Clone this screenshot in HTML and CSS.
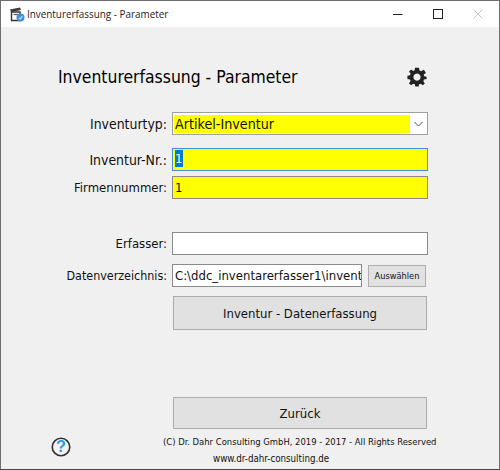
FILE: index.html
```html
<!DOCTYPE html>
<html lang="de">
<head>
    <meta charset="UTF-8">
    <meta name="viewport" content="width=device-width, initial-scale=1.0">
    <title>Inventurerfassung - Parameter</title>
    <link rel="stylesheet" href="styles.css">
</head>
<body>
    <div class="window">
        <!-- Title bar -->
        <div class="titlebar">
            <svg class="app-icon" width="16" height="16" viewBox="0 0 16 16">
                <path d="M1 3.5 L11 1.5 L12 4 L2 6 Z" fill="#3a3a3a"/>
                <path d="M2.5 6 H11 V14.5 H2.5 Z" fill="#fff" stroke="#333" stroke-width="1.4"/>
                <path d="M4.5 8.5 H9" stroke="#555" stroke-width="1.2"/>
                <circle cx="11.5" cy="11.5" r="4" fill="#3f8fd8"/>
                <path d="M9.8 11.8 L11.2 13 L13.4 10" stroke="#d5ecfb" stroke-width="1.1" fill="none"/>
            </svg>
            <span class="titlebar-text">Inventurerfassung - Parameter</span>
            <div class="window-buttons">
                <span class="win-btn">
                    <svg width="10" height="10" viewBox="0 0 10 10"><path d="M0 5.5 H9.5" stroke="#222" stroke-width="1"/></svg>
                </span>
                <span class="win-btn">
                    <svg width="10" height="10" viewBox="0 0 10 10"><rect x="0.5" y="0.5" width="9" height="9" fill="none" stroke="#222" stroke-width="1"/></svg>
                </span>
                <span class="win-btn">
                    <svg width="10" height="10" viewBox="0 0 10 10"><path d="M0.5 0.5 L9.5 9.5 M9.5 0.5 L0.5 9.5" stroke="#c4c4c4" stroke-width="1"/></svg>
                </span>
            </div>
        </div>

        <div class="content">
            <div class="heading-row">
                <h1>Inventurerfassung - Parameter</h1>
                <svg class="gear" width="20" height="20" viewBox="0 0 24 24">
                    <path fill="#222" fill-rule="evenodd" d="M9.6 1 H14.4 L15 4.2 L17 5 L19.7 3.2 L20.9 4.3 L22.7 7.1 L20 9 L20.7 11 L23.5 11.6 V14.4 L20.4 15 L19.6 17 L21.4 19.7 L18.9 21.9 L16.4 20 L14.6 20.8 L14 23.5 H10 L9.4 20.8 L7.4 20 L4.9 21.8 L2.3 19.4 L4.3 16.8 L3.5 15 L0.5 14.4 V10.6 L3.6 10 L4.3 8 L2.4 5.4 L5 2.9 L7.4 4.7 L9.2 4 Z M12 7.8 A4.3 4.3 0 1 0 12.01 7.8 Z"/>
                </svg>
            </div>

            <div class="form-row first-row">
                <label class="field-label label-wide">Inventurtyp:</label>
                <div class="combo">
                    <span class="combo-value">Artikel-Inventur</span>
                    <svg class="combo-arrow" width="9" height="6" viewBox="0 0 9 6"><path d="M0.5 1 L4.5 5 L8.5 1" fill="none" stroke="#555" stroke-width="1"/></svg>
                </div>
            </div>
            <div class="form-row nr-row">
                <label class="field-label label-wide">Inventur-Nr.:</label>
                <div class="field field-yellow field-focus"><span class="selected">1</span></div>
            </div>
            <div class="form-row firm-row">
                <label class="field-label">Firmennummer:</label>
                <div class="field field-yellow">1</div>
            </div>
            <div class="form-row erfasser-row">
                <label class="field-label">Erfasser:</label>
                <div class="field"></div>
            </div>
            <div class="form-row dir-row">
                <label class="field-label label-narrow">Datenverzeichnis:</label>
                <div class="field field-dir">C:\ddc_inventarerfasser1\invent</div>
                <button class="btn btn-small">Auswählen</button>
            </div>
            <div class="form-row start-row">
                <span></span>
                <button class="btn btn-big">Inventur - Datenerfassung</button>
            </div>
            <div class="form-row back-row">
                <span></span>
                <button class="btn btn-back">Zurück</button>
            </div>

            <div class="footer">
                <svg class="help" width="20" height="20" viewBox="0 0 21 21">
                    <circle cx="10.5" cy="10.5" r="9.2" fill="#f4f4f4" stroke="#333" stroke-width="1.7"/>
                    <text x="10.5" y="16.2" text-anchor="middle" class="help-mark">?</text>
                </svg>
                <div class="footer-text">
                    <p>(C) Dr. Dahr Consulting GmbH, 2019 - 2017 - All Rights Reserved</p>
                    <p class="footer-url">www.dr-dahr-consulting.de</p>
                </div>
            </div>
        </div>
    </div>
</body>
</html>
```

FILE: styles.css
```css
html, body {
    margin: 0;
    padding: 0;
}
body {
    width: 500px;
    height: 470px;
    overflow: hidden;
    font-family: "DejaVu Sans Condensed", "DejaVu Sans", sans-serif;
    font-stretch: condensed;
    color: #111;
}
.window {
    box-sizing: border-box;
    width: 500px;
    height: 470px;
    display: flex;
    flex-direction: column;
    background-color: #f0f0f0;
    border: 1px solid #6e6e6e;
    border-bottom-color: #444;
}
.titlebar {
    height: 26px;
    flex: none;
    display: flex;
    align-items: center;
    background: white;
    padding-left: 8px;
}
.app-icon {
    margin-right: 2px;
}
.titlebar-text {
    font-family: "Open Sans", sans-serif;
    font-stretch: normal;
    font-size: 9.9px;
    color: #222;
}
.window-buttons {
    margin-left: auto;
    display: flex;
    padding-right: 1px;
}
.win-btn {
    width: 40px;
    height: 26px;
    display: flex;
    align-items: center;
    justify-content: center;
}
.content {
    flex: 1;
    padding: 0 71px 0 0;
}
.heading-row {
    display: flex;
    align-items: center;
    justify-content: space-between;
    height: 24px;
    margin-top: 38px;
    padding-left: 57px;
}
.heading-row h1 {
    margin: 0;
    font-size: 17.4px;
    font-weight: 400;
    color: #000;
}
.gear {
    margin-right: 1px;
}
.form-row {
    display: grid;
    grid-template-columns: 166px 1fr;
    column-gap: 5px;
    align-items: center;
}
.field-label {
    text-align: right;
    font-size: 13px;
    white-space: nowrap;
}
.label-wide {
    font-size: 13.9px;
}
.label-narrow {
    font-size: 12.4px;
}
.first-row { margin-top: 23px; }
.nr-row { margin-top: 13px; }
.firm-row { margin-top: 5px; }
.erfasser-row { margin-top: 33px; }
.dir-row {
    margin-top: 9px;
    grid-template-columns: 166px 190px 59px;
}
.start-row { margin-top: 9px; }
.back-row { margin-top: 67px; }
.combo, .field {
    box-sizing: border-box;
    height: 23px;
    background: white;
    border: 1px solid #8a8a8a;
    font-size: 13px;
    line-height: 21px;
    white-space: nowrap;
    overflow: hidden;
}
.combo {
    display: flex;
    align-items: center;
    padding: 2px 1px 1px;
    border-color: #a0a0a0;
    font-size: 14.2px;
}
.combo-value {
    background: #ffff00;
    width: 235px;
    height: 18px;
    line-height: 18px;
    padding-left: 1px;
}
.combo-arrow {
    margin-left: 4px;
}
.field {
    padding-left: 2px;
}
.field-yellow {
    background: #ffff00;
}
.field-focus {
    border-color: #3d94dc;
}
.selected {
    background: #0078d7;
    color: white;
    width: 8px;
    display: inline-block;
    height: 17px;
    line-height: 17px;
    margin-top: 1px;
    vertical-align: top;
}
.btn {
    box-sizing: border-box;
    background: #e1e1e1;
    border: 1px solid #adadad;
    color: #111;
    font-family: inherit;
    font-stretch: inherit;
    padding: 0;
}
.btn-small {
    height: 22px;
    margin-left: 1px;
    font-size: 9.2px;
}
.btn-big {
    width: 254px;
    height: 34px;
    font-size: 13px;
    margin-left: 1px;
}
.btn-back {
    width: 254px;
    height: 32px;
    font-size: 13px;
    margin-left: 1px;
}
.footer {
    position: relative;
}
.help {
    position: absolute;
    left: 50px;
    top: 4px;
}
.help-mark {
    font-family: "Liberation Sans", sans-serif;
    font-size: 17px;
    font-weight: 700;
    fill: #2f9be0;
}
.footer-text {
    padding-left: 162px;
    font-size: 9.4px;
}
.footer-text p {
    margin: 0;
    height: 17px;
    line-height: 17px;
    white-space: nowrap;
}
.footer-text p:first-child {
    margin-top: 4px;
}
.footer-url {
    padding-left: 50px;
    font-size: 9.7px;
}
```
